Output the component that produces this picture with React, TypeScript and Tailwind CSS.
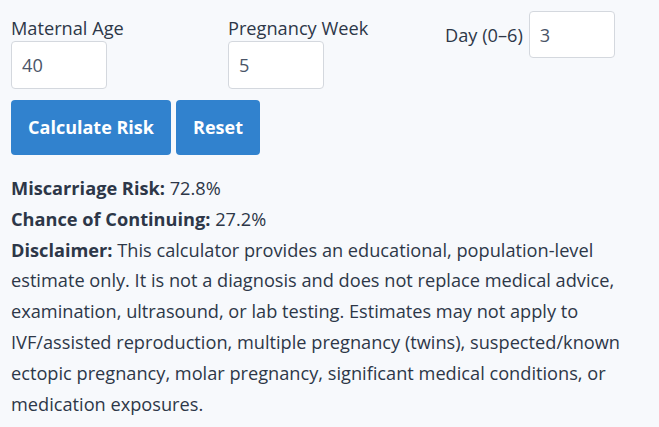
export default function App() {
  return (
    <div className="min-h-screen bg-[#f7f9fc] px-[11px] pt-[11px] text-[18.2px] text-[#2d3748] [font-family:'Open_Sans',sans-serif]">
      <div className="flex items-start">
        <div className="flex w-[217px] flex-col">
          <label className="h-[30px] pt-[2px] leading-[30px]">Maternal Age</label>
          <input
            defaultValue="40"
            className="h-[48px] w-[96px] rounded-[4px] border border-[#d4d8de] bg-white px-[10px] text-[#4a5568] outline-none"
          />
        </div>
        <div className="flex w-[217px] flex-col">
          <label className="h-[30px] pt-[2px] leading-[30px]">Pregnancy Week</label>
          <input
            defaultValue="5"
            className="h-[48px] w-[96px] rounded-[4px] border border-[#d4d8de] bg-white px-[10px] text-[#4a5568] outline-none"
          />
        </div>
        <div className="flex items-center gap-[6px]">
          <label className="pt-[2px]">Day (0–6)</label>
          <input
            defaultValue="3"
            className="h-[47px] w-[86px] rounded-[4px] border border-[#d4d8de] bg-white px-[10px] text-[#4a5568] outline-none"
          />
        </div>
      </div>

      <div className="mt-[11px] flex gap-[5px]">
        <button className="h-[55px] w-[160px] rounded-[4px] bg-[#3182ce] text-[18px] font-bold text-white">
          Calculate Risk
        </button>
        <button className="h-[55px] w-[84px] rounded-[4px] bg-[#3182ce] text-[18px] font-bold text-white">
          Reset
        </button>
      </div>

      <div className="mt-[18px] pr-[10px] leading-[30.8px]">
        <p>
          <strong>Miscarriage Risk:</strong> 72.8%
        </p>
        <p>
          <strong>Chance of Continuing:</strong> 27.2%
        </p>
        <p>
          <strong>Disclaimer:</strong> This calculator provides an educational, population-level estimate only. It is
          not a diagnosis and does not replace medical advice, examination, ultrasound, or lab testing. Estimates may
          not apply to IVF/assisted reproduction, multiple pregnancy (twins), suspected/known ectopic pregnancy, molar
          pregnancy, significant medical conditions, or medication exposures.
        </p>
      </div>
    </div>
  );
}
